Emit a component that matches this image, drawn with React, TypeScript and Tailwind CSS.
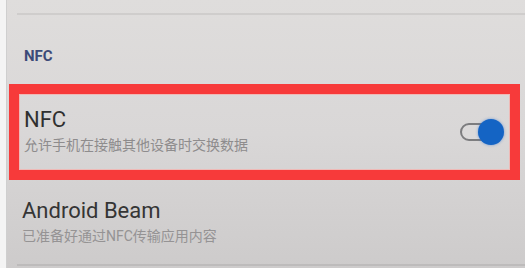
const FONT = { fontFamily: "Roboto, 'Noto Sans CJK SC', sans-serif" };

function Toggle() {
  return (
    <div className="relative w-[44px] h-[28px] flex items-center">
      {/* track */}
      <div className="w-[34px] h-[18px] rounded-full border-2 border-[#7d7d7f] bg-[#dcdada]" />
      {/* thumb */}
      <div className="absolute right-0 top-[1px] w-[26px] h-[26px] rounded-full bg-[#1464c4] shadow-[0_0_3px_rgba(40,110,210,0.6)]" />
    </div>
  );
}

export default function App() {
  return (
    <div className="w-[525px] h-[268px] flex overflow-hidden" style={FONT}>
      {/* left edge strip */}
      <div className="w-[7px] h-full bg-[#f4f4f4] border-r border-[#cfcfcf]" />

      <div className="flex-1 flex flex-col bg-gradient-to-b from-[#dfdddc] via-[#d9d7d7] to-[#cdcbcb]">
        <div className="h-[13px]" />
        <div className="h-[2px] ml-[10px] bg-[#cfcdcc]" />

        {/* section header */}
        <div className="h-[69px] flex items-center pl-[17px] pt-[14px]">
          <span className="text-[15px] font-bold text-[#3c4a78]">NFC</span>
        </div>

        {/* highlighted NFC row */}
        <div className="ml-[2px] mr-[5px] h-[96px] border-[10px] border-[#f73a3a] shadow-[inset_0_0_0_1px_#efb9b6] flex items-center justify-between pl-[5px] pr-[6px]">
          <div className="flex flex-col gap-[3px] pb-[4px]">
            <span className="text-[22px] leading-[26px] text-[#303030]">NFC</span>
            <span className="text-[14px] leading-[18px] text-[#8e8c8d]">允许手机在接触其他设备时交换数据</span>
          </div>
          <Toggle />
        </div>

        {/* Android Beam row */}
        <div className="flex flex-col gap-[3px] pl-[15px] pt-[18px]">
          <span className="text-[22px] leading-[26px] text-[#353535]">Android Beam</span>
          <span className="text-[14px] leading-[18px] text-[#959394]">已准备好通过NFC传输应用内容</span>
        </div>

        <div className="flex-1" />
        <div className="h-[2px] ml-[10px] mb-[2px] bg-[#bdbbbb]" />
      </div>
    </div>
  );
}
